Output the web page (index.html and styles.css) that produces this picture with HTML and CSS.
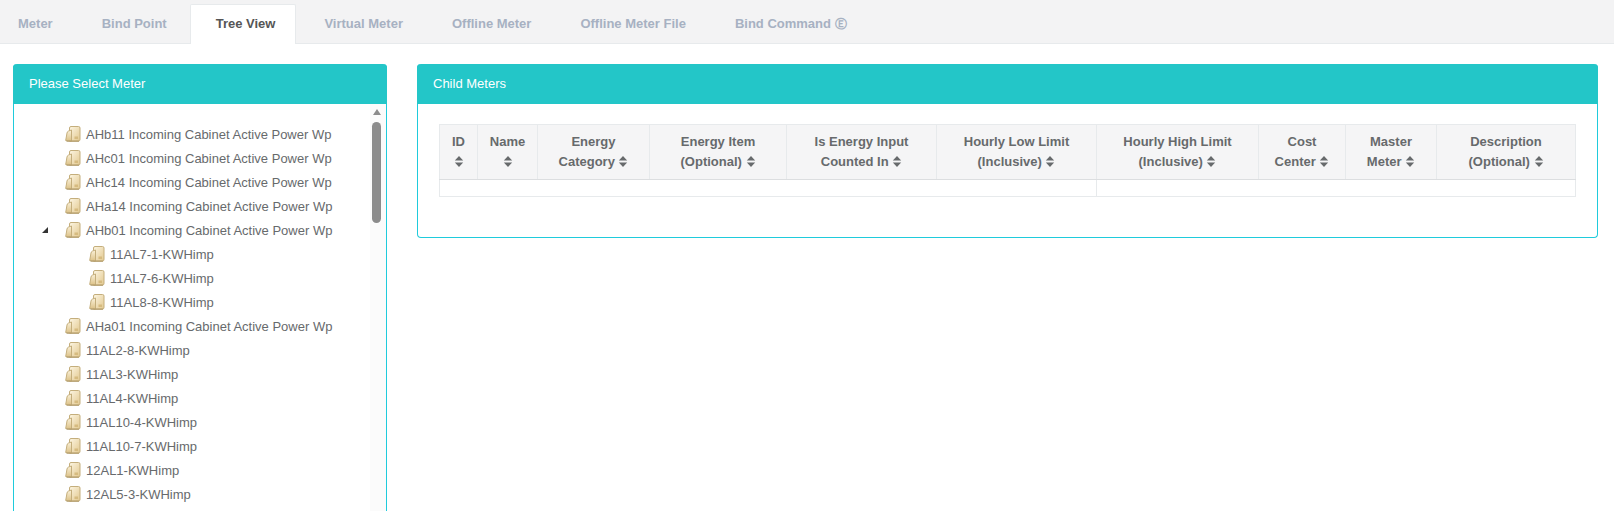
FILE: index.html
```html
<!DOCTYPE html>
<html lang="en">
<head>
<meta charset="utf-8">
<title>Tree View</title>
<link rel="stylesheet" href="styles.css">
</head>
<body>
<svg class="defs" width="0" height="0" aria-hidden="true">
  <defs>
    <linearGradient id="fg" x1="0" y1="0" x2="1" y2="1">
      <stop offset="0" stop-color="#fdf6e3"/>
      <stop offset="1" stop-color="#e2c88f"/>
    </linearGradient>
    <linearGradient id="fl" x1="0" y1="0" x2="0" y2="1">
      <stop offset="0" stop-color="#fbf2da"/>
      <stop offset="1" stop-color="#dcc187"/>
    </linearGradient>
    <symbol id="folder" viewBox="0 0 16 16">
      <path d="M4.500 2q0-1.500 1.500-1.500h7.500q1.500 0 1.500 1.500v11.500q0 1.500-1.500 1.500h-9z" fill="url(#fg)" stroke="#c4ae7c"/>
      <path d="M.7 14.500l1.300-7.500q.3-1.500 1.500-2l3-1v11z" fill="url(#fl)" stroke="#c4ae7c"/>
      <path d="M1.500 15.200h12.500" stroke="#ad9662"/>
      <path d="M9.500 10.500h3.500v2.500h-3.500z" fill="#d6bb80"/>
    </symbol>
    <symbol id="sort" viewBox="0 0 10 14">
      <path d="M5 1l4.500 5h-9zM5 13l-4.500-5h9z" fill="#676a6c"/>
    </symbol>
  </defs>
</svg>
<nav class="tabs">
  <a class="tab">Meter</a>
  <a class="tab">Bind Point</a>
  <a class="tab active">Tree View</a>
  <a class="tab">Virtual Meter</a>
  <a class="tab">Offline Meter</a>
  <a class="tab">Offline Meter File</a>
  <a class="tab">Bind Command <span class="circled">Ⓔ</span></a>
</nav>
<main class="content">
  <section class="card tree-card">
    <h5 class="card-title">Please Select Meter</h5>
    <div class="card-body tree-body">
      <ul class="tree">
        <li class="node"><svg class="folder"><use href="#folder"/></svg>AHb11 Incoming Cabinet Active Power Wp</li>
        <li class="node"><svg class="folder"><use href="#folder"/></svg>AHc01 Incoming Cabinet Active Power Wp</li>
        <li class="node"><svg class="folder"><use href="#folder"/></svg>AHc14 Incoming Cabinet Active Power Wp</li>
        <li class="node"><svg class="folder"><use href="#folder"/></svg>AHa14 Incoming Cabinet Active Power Wp</li>
        <li class="node"><i class="caret"></i><svg class="folder"><use href="#folder"/></svg>AHb01 Incoming Cabinet Active Power Wp</li>
        <li class="node child"><svg class="folder"><use href="#folder"/></svg>11AL7-1-KWHimp</li>
        <li class="node child"><svg class="folder"><use href="#folder"/></svg>11AL7-6-KWHimp</li>
        <li class="node child"><svg class="folder"><use href="#folder"/></svg>11AL8-8-KWHimp</li>
        <li class="node"><svg class="folder"><use href="#folder"/></svg>AHa01 Incoming Cabinet Active Power Wp</li>
        <li class="node"><svg class="folder"><use href="#folder"/></svg>11AL2-8-KWHimp</li>
        <li class="node"><svg class="folder"><use href="#folder"/></svg>11AL3-KWHimp</li>
        <li class="node"><svg class="folder"><use href="#folder"/></svg>11AL4-KWHimp</li>
        <li class="node"><svg class="folder"><use href="#folder"/></svg>11AL10-4-KWHimp</li>
        <li class="node"><svg class="folder"><use href="#folder"/></svg>11AL10-7-KWHimp</li>
        <li class="node"><svg class="folder"><use href="#folder"/></svg>12AL1-KWHimp</li>
        <li class="node"><svg class="folder"><use href="#folder"/></svg>12AL5-3-KWHimp</li>
      </ul>
      <div class="scrollbar">
        <i class="scroll-up"></i>
        <i class="scroll-thumb"></i>
      </div>
    </div>
  </section>
  <section class="card child-card">
    <h5 class="card-title">Child Meters</h5>
    <div class="card-body table-body">
      <table class="meters">
        <colgroup>
          <col class="c1"><col class="c2"><col class="c3"><col class="c4"><col class="c5">
          <col class="c6"><col class="c7"><col class="c8"><col class="c9"><col class="c10">
        </colgroup>
        <thead>
          <tr>
            <th>ID <svg class="sort"><use href="#sort"/></svg></th>
            <th>Name <svg class="sort"><use href="#sort"/></svg></th>
            <th>Energy<br>Category <svg class="sort"><use href="#sort"/></svg></th>
            <th>Energy Item<br>(Optional) <svg class="sort"><use href="#sort"/></svg></th>
            <th>Is Energy Input<br>Counted In <svg class="sort"><use href="#sort"/></svg></th>
            <th>Hourly Low Limit<br>(Inclusive) <svg class="sort"><use href="#sort"/></svg></th>
            <th>Hourly High Limit<br>(Inclusive) <svg class="sort"><use href="#sort"/></svg></th>
            <th>Cost<br>Center <svg class="sort"><use href="#sort"/></svg></th>
            <th>Master<br>Meter <svg class="sort"><use href="#sort"/></svg></th>
            <th>Description<br>(Optional) <svg class="sort"><use href="#sort"/></svg></th>
          </tr>
        </thead>
        <tbody>
          <tr><td colspan="6"></td><td colspan="4"></td></tr>
        </tbody>
      </table>
    </div>
  </section>
</main>
</body>
</html>
```
FILE: styles.css
```css
* { box-sizing: border-box; }
html, body { margin: 0; height: 511px; overflow: hidden; }
body {
  background: #fff;
  color: #676a6c;
  font-family: "Liberation Sans", Arial, sans-serif;
  font-size: 13px;
}
.defs { position: absolute; }

.tabs {
  display: flex;
  height: 44px;
  padding-top: 4px;
  background: #f3f3f4;
  border-bottom: 1px solid #e7eaec;
}
.tab {
  height: 39px;
  padding: 0 20px;
  margin-right: 9px;
  line-height: 39px;
  font-weight: 700;
  color: #a7b1c2;
  white-space: nowrap;
}
.tab:first-child { padding-left: 18px; }
.tab.active {
  height: 40px;
  margin: 0 8px 0 -6px;
  padding: 0 20px 0 25px;
  color: #555;
  background: #fff;
  border: 1px solid #e7eaec;
  border-bottom: 0;
  border-radius: 2px 2px 0 0;
  line-height: 37px;
}
.circled { font-size: 12px; }

.content {
  display: flex;
  align-items: flex-start;
  gap: 30px;
  padding: 20px 16px 0 13px;
}
.card {
  border: 1px solid #1fcbdc;
  border-top: 0;
  border-radius: 4px;
  background: #fff;
}
.card-title {
  height: 40px;
  margin: 0 -1px;
  padding: 0 16px;
  line-height: 40px;
  font-size: 13px;
  font-weight: 400;
  color: #fff;
  background: #23c6c8;
  border-radius: 4px 4px 0 0;
}
.tree-card { flex: 0 0 374px; height: 447px; border-bottom: 0; border-radius: 4px 4px 0 0; }
.child-card { flex: 1 1 auto; height: 174px; }

.tree-body { position: relative; height: 407px; overflow: hidden; }
.tree {
  list-style: none;
  margin: 0;
  padding: 18px 0 0 50px;
}
.node {
  position: relative;
  display: flex;
  align-items: center;
  height: 24px;
  white-space: nowrap;
}
.node.child { padding-left: 24px; }
.folder { width: 16px; height: 16px; margin: 0 5px 0 1px; flex: none; }
.caret {
  position: absolute;
  left: -22px;
  top: 9px;
  width: 0;
  height: 0;
  border-style: solid;
  border-width: 0 0 6px 6px;
  border-color: transparent transparent #333 transparent;
}
.scrollbar {
  position: absolute;
  top: 0;
  right: 0;
  width: 16px;
  height: 100%;
  background: #fbfbfb;
}
.scroll-up {
  position: absolute;
  top: 5px;
  left: 3px;
  width: 0;
  height: 0;
  border-style: solid;
  border-width: 0 4px 6px;
  border-color: transparent transparent #8c8c8c;
}
.scroll-thumb {
  position: absolute;
  top: 18px;
  left: 2px;
  width: 9px;
  height: 101px;
  border-radius: 5px;
  background: #8c8c8c;
}

.table-body { padding: 20px 21px 0; }
.meters {
  width: 1136px;
  table-layout: fixed;
  border-collapse: collapse;
  border: 1px solid #e7eaec;
}
.c1 { width: 38px; }
.c2 { width: 60px; }
.c3 { width: 112px; }
.c4 { width: 137px; }
.c5 { width: 150px; }
.c6 { width: 160px; }
.c7 { width: 162px; }
.c8 { width: 87px; }
.c9 { width: 91px; }
.c10 { width: 139px; }
.meters th {
  height: 55px;
  padding: 0 6px;
  line-height: 20px;
  font-weight: 700;
  text-align: center;
  background: #f5f5f6;
  border: 1px solid #e7eaec;
  border-bottom-color: #dcdee0;
}
.meters td {
  height: 17px;
  padding: 0;
  border: 1px solid #e7eaec;
}
.sort { width: 10px; height: 13px; vertical-align: -2px; }
```
